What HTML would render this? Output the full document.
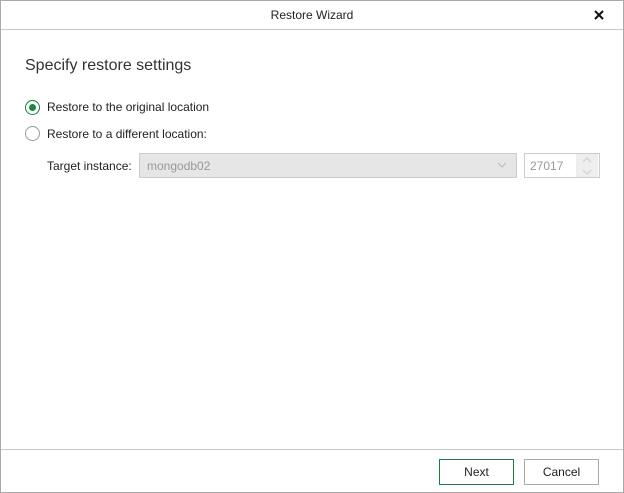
<!DOCTYPE html>
<html><head><style>
body{margin:0;width:624px;height:493px;overflow:hidden;background:#fff;font-family:"Liberation Sans",sans-serif;}
.win{position:absolute;left:0;top:0;width:622px;height:491px;border:1px solid #aaa;background:#fff;}
.t{position:absolute;color:#222;white-space:nowrap;}
.radio{position:absolute;width:13px;height:13px;border:1px solid #999;border-radius:50%;background:#fff;}
</style></head><body>
<div class="win"></div>
<div style="position:absolute;left:1px;top:29px;width:622px;height:1px;background:#c8c8c8"></div>
<div class="t" style="left:0;width:624px;text-align:center;top:8px;font-size:12px">Restore Wizard</div>
<svg style="position:absolute;left:594px;top:10px" width="10" height="10"><path d="M1 1L9 9M9 1L1 9" stroke="#111" stroke-width="2"/></svg>
<div class="t" style="left:25px;top:57px;font-size:16px;color:#333">Specify restore settings</div>
<div class="radio" style="left:25px;top:100px;border-color:#1a7a3e"></div>
<div style="position:absolute;left:29px;top:104px;width:7px;height:7px;border-radius:50%;background:#178a3e"></div>
<div class="t" style="left:47px;top:100px;font-size:12px">Restore to the original location</div>
<div class="radio" style="left:25px;top:126px"></div>
<div class="t" style="left:47px;top:127px;font-size:12px">Restore to a different location:</div>
<div class="t" style="left:47px;top:159px;font-size:12px">Target instance:</div>
<div style="position:absolute;left:139px;top:153px;width:376px;height:23px;border:1px solid #ccc;background:#e6e6e6"></div>
<div class="t" style="left:147px;top:159px;font-size:12px;color:#999">mongodb02</div>
<svg style="position:absolute;left:497px;top:162px" width="10" height="6"><path d="M1 1L5 5L9 1" stroke="#bbb" fill="none"/></svg>
<div style="position:absolute;left:524px;top:153px;width:74px;height:23px;border:1px solid #ccc;background:#fff"></div>
<div style="position:absolute;left:576px;top:154px;width:22px;height:23px;background:#eee"></div>
<div class="t" style="left:530px;top:159px;font-size:12px;color:#999">27017</div>
<svg style="position:absolute;left:582px;top:157px" width="10" height="18"><path d="M1 5L5 1L9 5M1 13L5 17L9 13" stroke="#ccc" fill="none"/></svg>
<div style="position:absolute;left:1px;top:449px;width:622px;height:1px;background:#c8c8c8"></div>
<div style="position:absolute;left:439px;top:459px;width:73px;height:24px;border:1px solid #1f7a45;font-size:12px;text-align:center;line-height:24px;color:#222">Next</div>
<div style="position:absolute;left:524px;top:459px;width:73px;height:24px;border:1px solid #aaa;font-size:12px;text-align:center;line-height:24px;color:#222">Cancel</div>
</body></html>
